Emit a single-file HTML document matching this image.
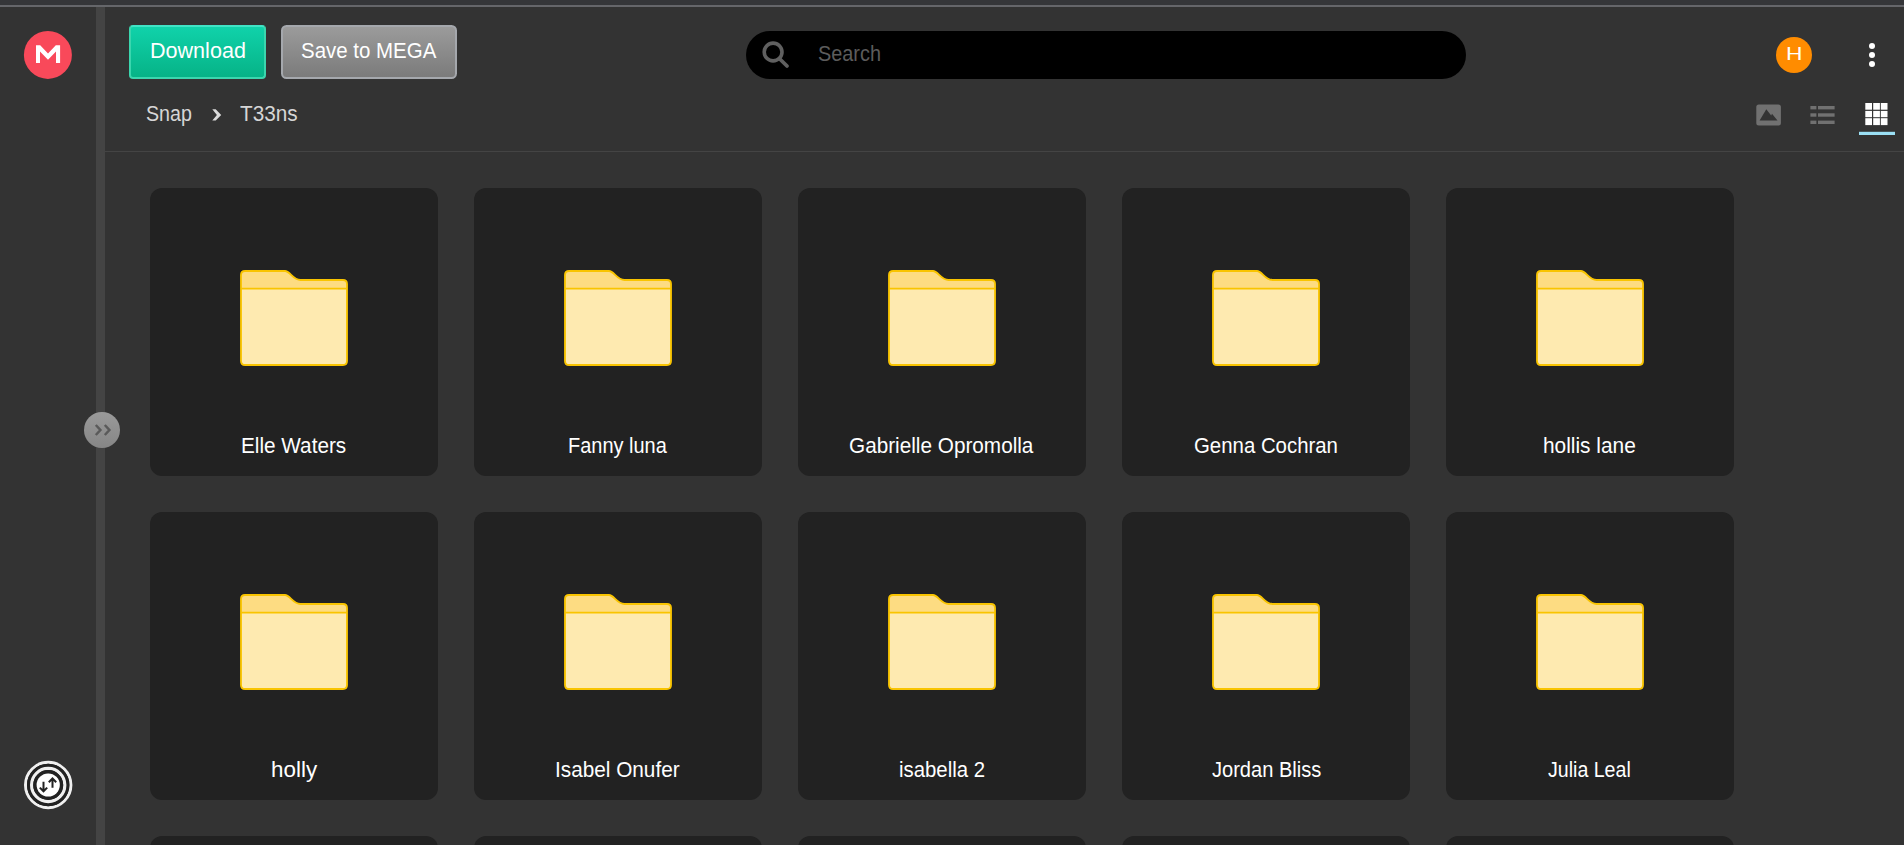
<!DOCTYPE html>
<html><head><meta charset="utf-8">
<style>
*{box-sizing:border-box;margin:0;padding:0}
html,body{width:1904px;height:845px;overflow:hidden;background:#333333;font-family:"Liberation Sans",sans-serif;}
.abs{position:absolute}
.t{position:absolute;line-height:40px;white-space:nowrap;transform-origin:0 0;font-family:"Liberation Sans",sans-serif}
#topstrip{left:0;top:0;width:1904px;height:5px;background:#353639}
#topline{left:0;top:5px;width:1904px;height:2px;background:#65666a}
#divider{left:96px;top:7px;width:9px;height:838px;background:#444444}
#hdrline{left:105px;top:151px;width:1799px;height:1px;background:#444444}
.btn{position:absolute;top:25px;height:54px;border-radius:5px}
#dl{left:129px;width:137px;border-radius:4px;background:linear-gradient(#10d2aa,#06b387);border:2px solid #3bd6ae;border-top-color:#41e3c5}
#save{left:281px;width:176px;border-radius:5.5px;background:linear-gradient(#9b9b9b,#7b7b7b);border:2px solid #a5a8ad}
#search{left:746px;top:31px;width:720px;height:48px;border-radius:24px;background:#000}
#avatar{left:1776px;top:37px;width:36px;height:36px;border-radius:50%;background:#ff8c00}
.dot{position:absolute;left:1868.8px;width:6.6px;height:6.6px;border-radius:50%;background:#fff}
.card{position:absolute;width:288px;height:288px;border-radius:12px;background:#222222}
.card svg{position:absolute;left:90px;top:82px}
</style></head>
<body>
<svg width="0" height="0" style="position:absolute"><defs><g id="fold">
<path d="M1 18.7 V5 Q1 1 5 1 H45 C50 1 53 10 60.5 10 H103 Q107 10 107 14 V18.7 Z" fill="#fddc82"/>
<path d="M1 18.7 H107 V91 Q107 95 103 95 H5 Q1 95 1 91 Z" fill="#feeab0"/>
<path d="M1 5 Q1 1 5 1 H45 C50 1 53 10 60.5 10 H103 Q107 10 107 14 V91 Q107 95 103 95 H5 Q1 95 1 91 Z" fill="none" stroke="#f9c400" stroke-width="1.85"/>
<line x1="1" y1="18.7" x2="107" y2="18.7" stroke="#f9c400" stroke-width="1.8"/>
</g></defs></svg>
<div id="topstrip" class="abs"></div>
<div id="topline" class="abs"></div>
<div id="divider" class="abs"></div>
<div id="hdrline" class="abs"></div>

<div class="btn" id="dl"></div>
<div class="btn" id="save"></div>
<div id="search" class="abs"></div>
<div id="avatar" class="abs"></div>
<div class="dot" style="top:42.7px"></div>
<div class="dot" style="top:51.5px"></div>
<div class="dot" style="top:60.7px"></div>

<svg class="abs" style="left:0;top:0" width="105" height="845" viewBox="0 0 105 845">
  <circle cx="47.9" cy="54.9" r="24" fill="#f9495a"/>
  <path d="M36 45.2 H40.2 L48 53.4 L55.8 45.2 H60.1 V63 H56 V51.6 L48 59.8 L40 51.6 V63 H36 Z" fill="#fff"/>
  <circle cx="48.2" cy="785" r="22.7" fill="none" stroke="#f0f0f0" stroke-width="3"/>
  <circle cx="48.2" cy="785" r="19.7" fill="none" stroke="#222" stroke-width="3"/>
  <circle cx="48.2" cy="785" r="16.6" fill="none" stroke="#f0f0f0" stroke-width="3.2"/>
  <circle cx="48.2" cy="785" r="13.3" fill="none" stroke="#222" stroke-width="3.4"/>
  <circle cx="48.2" cy="785" r="11.6" fill="#fff"/>
  <path d="M43.5 781.8 V791 M39.8 787.6 L43.5 791.3 L47.2 787.6" fill="none" stroke="#222" stroke-width="2"/>
  <path d="M52.5 787.8 V778.6 M48.8 782.2 L52.5 778.5 L56.2 782.2" fill="none" stroke="#222" stroke-width="2"/>
</svg>
<div class="abs" style="left:84px;top:412px;width:36px;height:36px;border-radius:50%;background:linear-gradient(#9a9a9a,#868686)"></div>
<svg class="abs" style="left:84px;top:412px" width="36" height="36" viewBox="0 0 36 36">
  <path d="M11.8 13 L16.4 18 L11.8 23 M20.8 13 L25.4 18 L20.8 23" fill="none" stroke="#5a5a5a" stroke-width="2.5"/>
</svg>
<svg class="abs" style="left:755px;top:36px" width="40" height="40" viewBox="0 0 40 40">
  <circle cx="18.1" cy="16" r="8.9" fill="none" stroke="#606060" stroke-width="3.6"/>
  <path d="M24.3 22.5 L32 30" stroke="#606060" stroke-width="3.8" stroke-linecap="round"/>
</svg>
<svg class="abs" style="left:0;top:0" width="240" height="140" viewBox="0 0 240 140">
  <path d="M212.3 109.2 L215.7 109.2 L221.2 114.9 L215.7 120.6 L212.3 120.6 L216.9 114.9 Z" fill="#dadada"/>
</svg>
<svg class="abs" style="left:1750px;top:98px" width="150" height="40" viewBox="0 0 150 40">
  <rect x="6.3" y="6.6" width="24.6" height="21" rx="2.5" fill="#717171"/>
  <path d="M9.6 22.4 L16.3 11.2 L21.2 17.5 L22 15.8 L27.5 22.4 Z" fill="#333"/>
  <rect x="60.4" y="8" width="6" height="3.4" fill="#717171"/>
  <rect x="68" y="8" width="16.6" height="3.4" fill="#717171"/>
  <rect x="60.4" y="15.3" width="6" height="3.4" fill="#717171"/>
  <rect x="68" y="15.3" width="16.6" height="3.4" fill="#717171"/>
  <rect x="60.4" y="22.6" width="6" height="3.4" fill="#717171"/>
  <rect x="68" y="22.6" width="16.6" height="3.4" fill="#717171"/>
  <g fill="#fff">
    <rect x="115.3" y="5" width="6.7" height="6.7"/><rect x="123.2" y="5" width="6.7" height="6.7"/><rect x="130.8" y="5" width="6.7" height="6.7"/>
    <rect x="115.3" y="12.9" width="6.7" height="6.3"/><rect x="123.2" y="12.9" width="6.7" height="6.3"/><rect x="130.8" y="12.9" width="6.7" height="6.3"/>
    <rect x="115.3" y="20.2" width="6.7" height="6.9"/><rect x="123.2" y="20.2" width="6.7" height="6.9"/><rect x="130.8" y="20.2" width="6.7" height="6.9"/>
  </g>
  <rect x="109" y="33.8" width="36" height="3.2" fill="#9be0f5"/>
</svg>

<div class="card" style="left:150px;top:188px"><svg width="108" height="96" viewBox="0 0 108 96"><use href="#fold"/></svg></div>
<div class="card" style="left:474px;top:188px"><svg width="108" height="96" viewBox="0 0 108 96"><use href="#fold"/></svg></div>
<div class="card" style="left:798px;top:188px"><svg width="108" height="96" viewBox="0 0 108 96"><use href="#fold"/></svg></div>
<div class="card" style="left:1122px;top:188px"><svg width="108" height="96" viewBox="0 0 108 96"><use href="#fold"/></svg></div>
<div class="card" style="left:1446px;top:188px"><svg width="108" height="96" viewBox="0 0 108 96"><use href="#fold"/></svg></div>
<div class="card" style="left:150px;top:512px"><svg width="108" height="96" viewBox="0 0 108 96"><use href="#fold"/></svg></div>
<div class="card" style="left:474px;top:512px"><svg width="108" height="96" viewBox="0 0 108 96"><use href="#fold"/></svg></div>
<div class="card" style="left:798px;top:512px"><svg width="108" height="96" viewBox="0 0 108 96"><use href="#fold"/></svg></div>
<div class="card" style="left:1122px;top:512px"><svg width="108" height="96" viewBox="0 0 108 96"><use href="#fold"/></svg></div>
<div class="card" style="left:1446px;top:512px"><svg width="108" height="96" viewBox="0 0 108 96"><use href="#fold"/></svg></div>
<div class="card" style="left:150px;top:836px"></div>
<div class="card" style="left:474px;top:836px"></div>
<div class="card" style="left:798px;top:836px"></div>
<div class="card" style="left:1122px;top:836px"></div>
<div class="card" style="left:1446px;top:836px"></div>

<div class="t" style="left:149.94px;top:30.80px;font-size:22px;color:#fff;transform:scaleX(0.9798)">Download</div>
<div class="t" style="left:301.17px;top:30.90px;font-size:22px;color:#fff;transform:scaleX(0.9299)">Save to MEGA</div>
<div class="t" style="left:146.21px;top:93.90px;font-size:22px;color:#d6d6d6;transform:scaleX(0.8940)">Snap</div>
<div class="t" style="left:240.00px;top:93.90px;font-size:22px;color:#d6d6d6;transform:scaleX(0.9426)">T33ns</div>
<div class="t" style="left:817.50px;top:34.00px;font-size:22px;color:#5c5c5c;transform:scaleX(0.9030)">Search</div>
<div class="t" style="left:1785.60px;top:33.85px;font-size:19px;color:#fff;transform:scaleX(1.2000)">H</div>
<div class="t" style="left:241.12px;top:426.00px;font-size:22px;color:#fff;transform:scaleX(0.9422)">Elle Waters</div>
<div class="t" style="left:567.99px;top:426.00px;font-size:22px;color:#fff;transform:scaleX(0.9075)">Fanny luna</div>
<div class="t" style="left:849.06px;top:426.00px;font-size:22px;color:#fff;transform:scaleX(0.9426)">Gabrielle Opromolla</div>
<div class="t" style="left:1194.17px;top:426.00px;font-size:22px;color:#fff;transform:scaleX(0.9268)">Genna Cochran</div>
<div class="t" style="left:1543.20px;top:426.00px;font-size:22px;color:#fff;transform:scaleX(0.9484)">hollis lane</div>
<div class="t" style="left:270.66px;top:750.00px;font-size:22px;color:#fff;transform:scaleX(1.0186)">holly</div>
<div class="t" style="left:555.31px;top:750.00px;font-size:22px;color:#fff;transform:scaleX(0.9438)">Isabel Onufer</div>
<div class="t" style="left:898.87px;top:750.00px;font-size:22px;color:#fff;transform:scaleX(0.9253)">isabella 2</div>
<div class="t" style="left:1211.50px;top:750.00px;font-size:22px;color:#fff;transform:scaleX(0.9118)">Jordan Bliss</div>
<div class="t" style="left:1548.30px;top:750.00px;font-size:22px;color:#fff;transform:scaleX(0.8902)">Julia Leal</div>
</body></html>
